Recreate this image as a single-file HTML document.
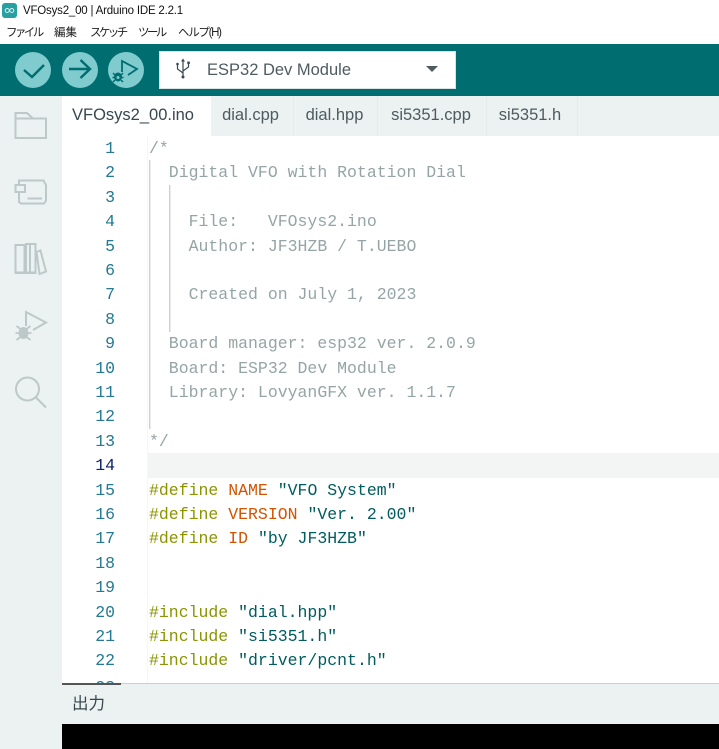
<!DOCTYPE html>
<html><head><meta charset="utf-8">
<style>
html,body{margin:0;padding:0;width:719px;height:749px;overflow:hidden;background:#fff}
*{box-sizing:border-box}
.a{position:absolute;white-space:pre}
body{font-family:"Liberation Sans","Noto Sans CJK JP",sans-serif;position:relative}
.m{position:absolute;top:25px;font-size:11.5px;line-height:16px;color:#222;white-space:pre}
.tab{position:absolute;top:96px;height:40px;line-height:39px;font-size:16.5px;color:#4e5b61;text-align:center;background:#ecf1f1;border-right:1px solid #e6ecec;white-space:pre}
.ln{position:absolute;left:62px;width:53px;text-align:right;font:16.5px/24px "Liberation Mono",monospace;color:#237893}
.c{position:absolute;left:149px;font:16.5px/24px "Liberation Mono",monospace;white-space:pre;color:#95a5a6}
.k{color:#8a9500}.o{color:#d35400}.s{color:#005c5f}
.g{position:absolute;width:2px;background:linear-gradient(90deg,#cfcfcf 50%,#ececec 50%)}
</style></head><body>
<svg class="a" style="left:2px;top:3px" width="15" height="15" viewBox="0 0 15 15"><rect width="15" height="15" rx="3" fill="#26a0a0"/><circle cx="5.2" cy="7.5" r="2" fill="none" stroke="#d5f0f0"/><circle cx="9.800" cy="7.500" r="2" fill="none" stroke="#d5f0f0"/></svg>
<div class="a" style="left:23px;top:3px;font-size:11.5px;letter-spacing:-.2px;line-height:16px;color:#111">VFOsys2_00 | Arduino IDE 2.2.1</div>
<div class="m" style="left:6px;letter-spacing:-2.6px">ファイル</div>
<div class="m" style="left:54px">編集</div>
<div class="m" style="left:90px;letter-spacing:-2.600px">スケッチ</div>
<div class="m" style="left:138px;letter-spacing:-2.600px">ツール</div>
<div class="m" style="left:178px;letter-spacing:-1.300px">ヘルプ(H)</div>

<div class="a" style="left:0;top:44px;width:719px;height:52px;background:#006d70"></div>
<svg class="a" style="left:15px;top:52px" width="130" height="36" viewBox="0 0 130 36">
<circle cx="18" cy="18" r="18" fill="#7fcbcd"/><circle cx="65" cy="18" r="18" fill="#7fcbcd"/><circle cx="111" cy="18" r="18" fill="#7fcbcd"/>
<path d="M9 18l8 7 12-12" fill="none" stroke="#006d70" stroke-width="2.400"/>
<path d="M54 17h21M65.500 8l9.500 9-9.500 9" fill="none" stroke="#006d70" stroke-width="2.400"/>
<path d="M107 20V9l15 8-9 6" fill="none" stroke="#006d70" stroke-width="1.800"/>
<ellipse cx="103" cy="25" rx="4" ry="4.500" fill="#006d70"/><path d="M98 21l2 2M108 21l-2 2M97.500 25.500h11M98 30l2-2M108 30l-2-2" stroke="#006d70" stroke-width="1.500" fill="none"/><circle cx="103" cy="25.500" r="1.500" fill="#7fcbcd"/>
</svg>
<div class="a" style="left:159px;top:51px;width:297px;height:38px;background:#fff;border:1px solid #dae3e3"></div>
<svg class="a" style="left:175px;top:58px" width="17" height="22" viewBox="0 0 17 22"><path d="M8 3v16M2.500 7v4l5.500 4M13.500 6v3l-5.500 4" fill="none" stroke="#37474f" stroke-width="1.200"/><circle cx="8" cy="19" r="1.500" fill="#37474f"/><circle cx="2.500" cy="6" r="1.300" fill="#37474f"/><rect x="12.300" y="3.500" width="2.500" height="2.500" fill="#37474f"/><path d="M6 3.500L8 .5l2 3z" fill="#37474f"/></svg>
<div class="a" style="left:207px;top:60px;font-size:16.5px;line-height:20px;color:#4e5b61">ESP32 Dev Module</div>
<div class="a" style="left:426px;top:66px;width:0;height:0;border-left:6px solid transparent;border-right:6px solid transparent;border-top:6px solid #4e5b61"></div>

<div class="a" style="left:0;top:96px;width:62px;height:653px;background:#ecf1f1"></div>
<svg class="a" style="left:0;top:0" width="62" height="420" viewBox="0 0 62 420" fill="none" stroke="#bdc9c9" stroke-width="2">
<path d="M15.500 138V113H27l6 5.500h13V138zM15.500 118.500H33"/>
<path d="M19 192v10l2 1.500h23l2-3V185l-2.500-4.500H19V185M15.500 185h9.500v7h-9.500zM27.500 198.500H42"/>
<path d="M15.500 245h9v28h-9zM26 244h9.500v29H26zM15.500 272.500H35.500M30 244v29"/><path d="M36.500 252l4-1.500 5.500 21-6.500 2.500z"/>
<path d="M26 326V312l20 10.500-13 7.500"/>
<ellipse cx="23.500" cy="333" rx="5" ry="6" fill="#bdc9c9" stroke="none"/><path d="M16.500 326l4 3M30.500 326l-4 3M15.500 333h16M16.500 340l4-3M30.500 340l-4-3" stroke-width="1.800"/>
<circle cx="27.500" cy="389" r="11.500"/><path d="M36 397.500l10 10"/>
</svg>

<div class="a" style="left:62px;top:96px;width:657px;height:40px;background:#ecf1f1"></div>
<div class="tab" style="left:62px;width:149px;background:#fff;border:0;color:#37474f;text-align:left;padding-left:10px">VFOsys2_00.ino</div>
<div class="tab" style="left:211px;width:83px;padding-right:3px">dial.cpp</div>
<div class="tab" style="left:294px;width:84px;padding-right:2px">dial.hpp</div>
<div class="tab" style="left:378px;width:109px;padding-right:2px">si5351.cpp</div>
<div class="tab" style="left:487px;width:91px;padding-right:4px">si5351.h</div>

<div class="a" style="left:148px;top:453px;width:571px;height:25px;background:#f3f5f5"></div>
<div class="a" style="left:147px;top:136px;width:1px;height:547px;background:#f6f6f6"></div>
<div class="g" style="left:149px;top:160px;height:269px"></div>
<div class="g" style="left:169px;top:185px;height:147px"></div>

<div class="ln" style="top:137px">1</div><div class="ln" style="top:161px">2</div><div class="ln" style="top:186px">3</div><div class="ln" style="top:210px">4</div><div class="ln" style="top:235px">5</div><div class="ln" style="top:259px">6</div><div class="ln" style="top:283px">7</div><div class="ln" style="top:308px">8</div><div class="ln" style="top:332px">9</div><div class="ln" style="top:357px">10</div><div class="ln" style="top:381px">11</div><div class="ln" style="top:405px">12</div><div class="ln" style="top:430px">13</div><div class="ln" style="top:454px;color:#0b216f">14</div><div class="ln" style="top:479px">15</div><div class="ln" style="top:503px">16</div><div class="ln" style="top:527px">17</div><div class="ln" style="top:552px">18</div><div class="ln" style="top:576px">19</div><div class="ln" style="top:601px">20</div><div class="ln" style="top:625px">21</div><div class="ln" style="top:649px">22</div><div class="ln" style="top:676px">23</div>

<div class="c" style="top:137px">/*</div>
<div class="c" style="top:161px">  Digital VFO with Rotation Dial</div>
<div class="c" style="top:210px">    File:   VFOsys2.ino</div>
<div class="c" style="top:235px">    Author: JF3HZB / T.UEBO</div>
<div class="c" style="top:283px">    Created on July 1, 2023</div>
<div class="c" style="top:332px">  Board manager: esp32 ver. 2.0.9</div>
<div class="c" style="top:357px">  Board: ESP32 Dev Module</div>
<div class="c" style="top:381px">  Library: LovyanGFX ver. 1.1.7</div>
<div class="c" style="top:430px">*/</div>
<div class="c" style="top:479px"><span class="k">#define</span> <span class="o">NAME</span> <span class="s">"VFO System"</span></div>
<div class="c" style="top:503px"><span class="k">#define</span> <span class="o">VERSION</span> <span class="s">"Ver. 2.00"</span></div>
<div class="c" style="top:527px"><span class="k">#define</span> <span class="o">ID</span> <span class="s">"by JF3HZB"</span></div>
<div class="c" style="top:601px"><span class="k">#include</span> <span class="s">"dial.hpp"</span></div>
<div class="c" style="top:625px"><span class="k">#include</span> <span class="s">"si5351.h"</span></div>
<div class="c" style="top:649px"><span class="k">#include</span> <span class="s">"driver/pcnt.h"</span></div>

<div class="a" style="left:62px;top:683px;width:657px;height:41px;background:#ecf1f1;border-top:1px solid #c8cfcf"></div>
<div class="a" style="left:62px;top:683px;width:59px;height:2px;background:#555"></div>
<div class="a" style="left:72px;top:693px;font-size:16.5px;line-height:22px;color:#37474f">出力</div>
<div class="a" style="left:62px;top:724px;width:657px;height:25px;background:#000"></div>
</body></html>
